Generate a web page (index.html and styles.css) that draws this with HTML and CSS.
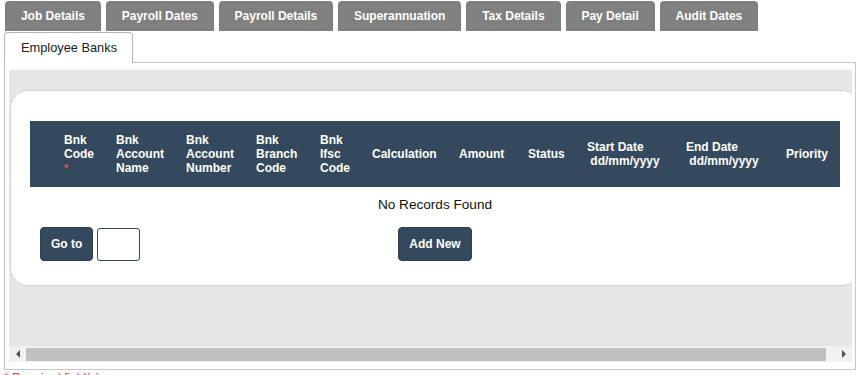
FILE: index.html
```html
<!DOCTYPE html>
<html lang="en">
<head>
    <meta charset="UTF-8">
    <title>Employee Banks</title>
    <link rel="stylesheet" href="styles.css">
</head>
<body>
    <div class="page">
        <div class="tabs">
            <a class="tab">Job Details</a>
            <a class="tab">Payroll Dates</a>
            <a class="tab">Payroll Details</a>
            <a class="tab">Superannuation</a>
            <a class="tab">Tax Details</a>
            <a class="tab">Pay Detail</a>
            <a class="tab">Audit Dates</a>
        </div>
        <div class="tabs-active">
            <a class="tab-current">Employee Banks</a>
        </div>

        <div class="panel">
            <div class="scroll-view">
                <div class="card">
                    <table class="grid">
                        <colgroup>
                            <col style="width:26px">
                            <col style="width:52px">
                            <col style="width:70px">
                            <col style="width:70px">
                            <col style="width:64px">
                            <col style="width:52px">
                            <col style="width:87px">
                            <col style="width:69px">
                            <col style="width:59px">
                            <col style="width:99px">
                            <col style="width:100px">
                            <col style="width:62px">
                        </colgroup>
                        <thead>
                            <tr>
                                <th></th>
                                <th>Bnk Code <span class="req">*</span></th>
                                <th>Bnk Account Name</th>
                                <th>Bnk Account Number</th>
                                <th>Bnk Branch Code</th>
                                <th>Bnk Ifsc Code</th>
                                <th>Calculation</th>
                                <th>Amount</th>
                                <th>Status</th>
                                <th>Start Date<br>&nbsp;dd/mm/yyyy</th>
                                <th>End Date<br>&nbsp;dd/mm/yyyy</th>
                                <th>Priority</th>
                            </tr>
                        </thead>
                        <tbody>
                            <tr>
                                <td class="empty" colspan="12">No Records Found</td>
                            </tr>
                        </tbody>
                    </table>

                    <div class="actions">
                        <div class="pager">
                            <button class="btn">Go to</button>
                            <input class="page-input" type="text">
                        </div>
                        <button class="btn">Add New</button>
                        <div></div>
                    </div>
                </div>
            </div>
            <div class="hscroll">
                <span class="hscroll-btn"><i class="arrow-left"></i></span>
                <span class="hscroll-thumb"></span>
                <span class="hscroll-rest"></span>
                <span class="hscroll-btn"><i class="arrow-right"></i></span>
            </div>
        </div>

        <div class="note">* Required field(s)</div>
    </div>
</body>
</html>
```

FILE: styles.css
```css
* {
    margin: 0;
    padding: 0;
    box-sizing: border-box;
}

body {
    font-family: "Liberation Sans", Arial, Helvetica, sans-serif;
    color: #222;
    background: #fff;
}

.page {
    padding: 1px 8px 0 4px;
}

/* tabs */
.tabs {
    display: flex;
    gap: 5px;
    margin-left: 1px;
}

.tab {
    display: block;
    height: 30px;
    line-height: 30px;
    padding: 0 15.9px;
    background: #808080;
    color: #fff;
    font-size: 12px;
    font-weight: bold;
    border-radius: 4px 4px 0 0;
}

.tabs-active {
    display: flex;
    margin-top: 1px;
}

.tab-current {
    position: relative;
    z-index: 1;
    display: block;
    height: 31px;
    line-height: 29px;
    padding: 0 15px 0 16px;
    background: #fff;
    border: 1px solid #b4b4b4;
    border-bottom: none;
    border-radius: 4px 4px 0 0;
    font-size: 12.8px;
    color: #222;
    margin-bottom: -1px;
}

/* panel */
.panel {
    border: 1px solid #c8c8c8;
    padding: 7px 3px 7px 4px;
}

.scroll-view {
    background: #e6e6e6;
    overflow: hidden;
    padding: 20px 0 60px 1px;
}

.card {
    width: 850px;
    background: #fff;
    border: 1px solid #d4d4d4;
    border-radius: 18px;
    padding: 30px 19px 24px 19px;
}

.grid {
    width: 810px;
    table-layout: fixed;
    border-collapse: collapse;
}

.grid th {
    height: 66px;
    background: #34495e;
    color: #fff;
    font-size: 12px;
    font-weight: bold;
    line-height: 14px;
    text-align: left;
    vertical-align: middle;
    padding: 0 8px;
}

.req {
    color: #d9534f;
    font-size: 11px;
}

.grid td.empty {
    text-align: center;
    font-size: 13.6px;
    line-height: 16px;
    padding: 10px 0 8px;
    color: #111;
}

.actions {
    display: grid;
    grid-template-columns: 1fr auto 1fr;
    align-items: center;
    margin-top: 6px;
}

.pager {
    display: flex;
    align-items: center;
    gap: 4px;
    padding-left: 10px;
}

.btn {
    height: 34px;
    padding: 0 10px;
    background: #34495e;
    color: #fff;
    border: 1px solid #2c3e50;
    border-radius: 4px;
    font-family: inherit;
    font-size: 12px;
    font-weight: bold;
    cursor: pointer;
}

.page-input {
    width: 43px;
    height: 33px;
    margin-top: 1px;
    border: 1px solid #34495e;
    border-radius: 3px;
    background: #fff;
}

/* horizontal scrollbar */
.hscroll {
    display: flex;
    height: 16px;
    background: #f1f1f1;
}

.hscroll-btn {
    width: 17px;
    display: flex;
    align-items: center;
    justify-content: center;
}

.hscroll-thumb {
    width: 800px;
    height: 13px;
    margin-top: 2px;
    background: #c1c1c1;
}

.hscroll-rest {
    flex: 1;
}

.arrow-left {
    width: 0;
    height: 0;
    border-top: 4px solid transparent;
    border-bottom: 4px solid transparent;
    border-right: 4px solid #505050;
}

.arrow-right {
    width: 0;
    height: 0;
    border-top: 4px solid transparent;
    border-bottom: 4px solid transparent;
    border-left: 4px solid #505050;
}

.note {
    color: #e53935;
    font-size: 12px;
    line-height: 14px;
    padding-top: 1px;
}
```
